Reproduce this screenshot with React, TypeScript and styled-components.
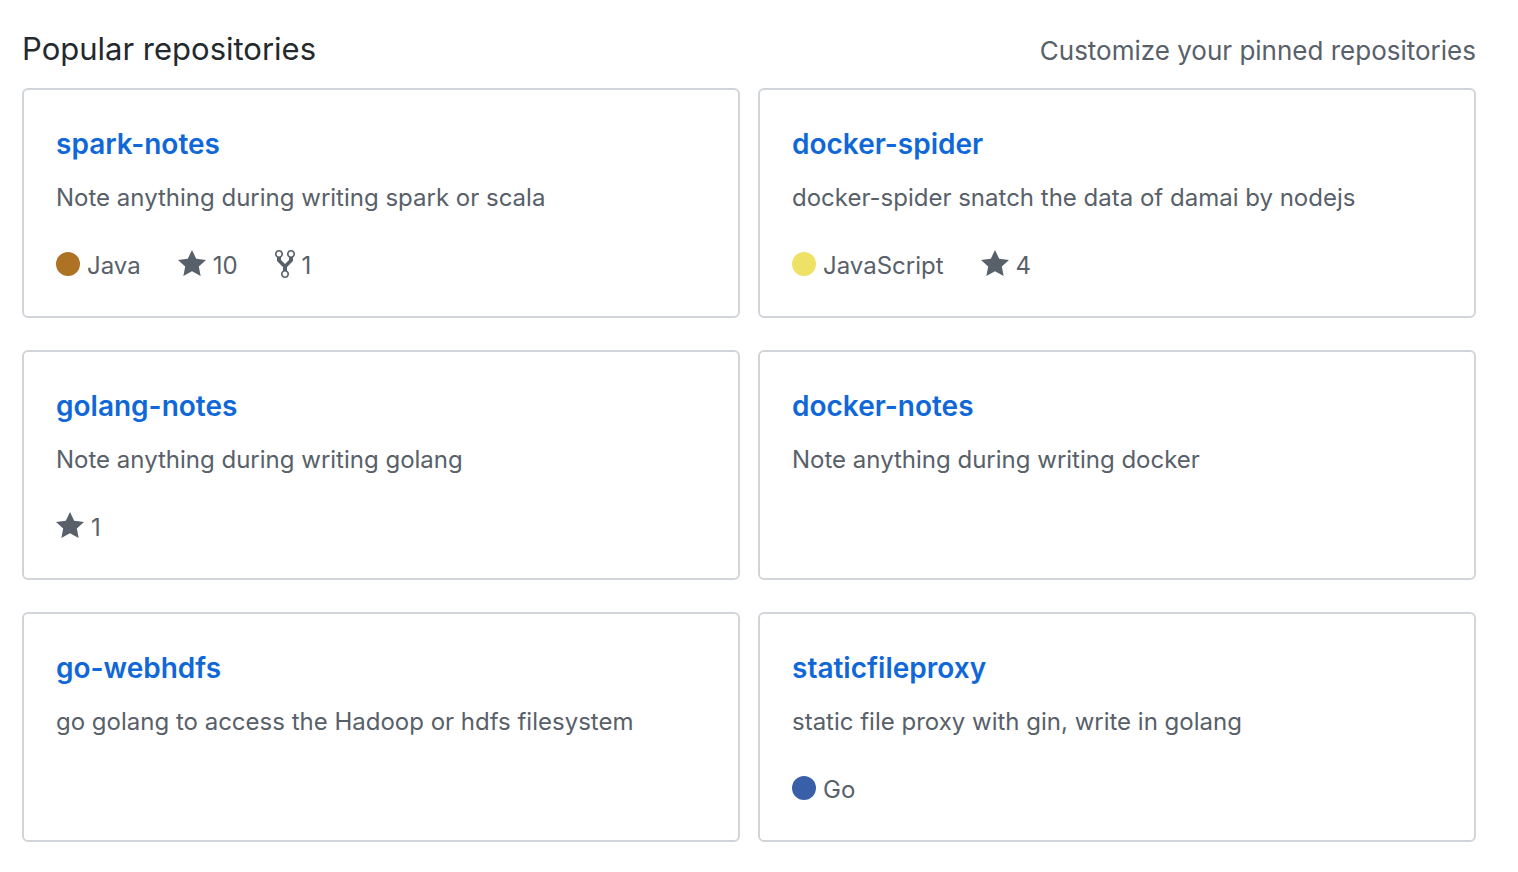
import React from "react";
import styled, { createGlobalStyle } from "styled-components";

const GlobalStyle = createGlobalStyle`
  * { box-sizing: border-box; }
  body {
    margin: 0;
    background: #fff;
    color: #24292e;
    font-family: Inter, "Liberation Sans", sans-serif;
    font-size: 24px;
    line-height: 36px;
  }
`;

const Page = styled.main`
  padding: 24px 42px 30px 22px;
`;

const Header = styled.header`
  display: flex;
  align-items: baseline;
  justify-content: space-between;
  margin-bottom: 14px;
`;

const Heading = styled.h2`
  margin: 0;
  font-size: 31px;
  font-weight: 400;
  line-height: 50px;
`;

const CustomizeLink = styled.a`
  color: #586069;
  font-size: 26px;
  text-decoration: none;
`;

const RepoGrid = styled.ol`
  display: grid;
  grid-template-columns: repeat(2, minmax(0, 1fr));
  gap: 32px 18px;
  margin: 0;
  padding: 0;
  list-style: none;
`;

const RepoCard = styled.li`
  display: flex;
  flex-direction: column;
  min-height: 230px;
  padding: 32px;
  border: 2px solid #d1d5da;
  border-radius: 6px;
`;

const RepoName = styled.a`
  align-self: flex-start;
  color: #1068d8;
  font-size: 28px;
  font-weight: 600;
  line-height: 44px;
  text-decoration: none;
`;

const Description = styled.p`
  margin: 14px 0 32px;
  color: #586069;
`;

const Meta = styled.div`
  display: flex;
  gap: 37px;
  color: #586069;
`;

const MetaItem = styled.span`
  display: flex;
  align-items: center;
  gap: 7px;
`;

const MetaLink = styled(MetaItem).attrs({ as: "a" })<{ href: string }>`
  color: inherit;
  text-decoration: none;
`;

const LanguageDot = styled.span<{ $color: string }>`
  width: 24px;
  height: 24px;
  margin-bottom: 4px;
  border-radius: 50%;
  background: ${(p) => p.$color};
`;

const Icon = styled.svg`
  height: 32px;
  margin-bottom: 4px;
  fill: currentColor;
`;

const StarIcon = () => (
  <Icon width="28" viewBox="0 0 14 16" aria-hidden="true">
    <path d="M14 6l-4.9-.64L7 1 4.9 5.36 0 6l3.6 3.26L2.67 14 7 11.67 11.33 14l-.93-4.74z" />
  </Icon>
);

const ForkIcon = () => (
  <Icon width="20" viewBox="0 0 10 16" aria-hidden="true">
    <path
      fillRule="evenodd"
      d="M8 1a1.993 1.993 0 0 0-1 3.72V6L5 8 3 6V4.72A1.993 1.993 0 0 0 2 1a1.993 1.993 0 0 0-1 3.72V6.5l3 3v1.78A1.993 1.993 0 0 0 5 15a1.993 1.993 0 0 0 1-3.72V9.5l3-3V4.72A1.993 1.993 0 0 0 8 1zM2 4.2C1.34 4.2.8 3.65.8 3c0-.65.55-1.2 1.2-1.2.65 0 1.2.55 1.2 1.2 0 .65-.55 1.2-1.2 1.2zm3 10c-.66 0-1.2-.55-1.2-1.2 0-.65.55-1.2 1.2-1.2.65 0 1.2.55 1.2 1.2 0 .65-.55 1.2-1.2 1.2zm3-10c-.66 0-1.2-.55-1.2-1.2 0-.65.55-1.2 1.2-1.2.65 0 1.2.55 1.2 1.2 0 .65-.55 1.2-1.2 1.2z"
    />
  </Icon>
);

interface Repo {
  name: string;
  description: string;
  language?: { name: string; color: string };
  stars?: number;
  forks?: number;
}

const repos: Repo[] = [
  {
    name: "spark-notes",
    description: "Note anything during writing spark or scala",
    language: { name: "Java", color: "#ae7225" },
    stars: 10,
    forks: 1,
  },
  {
    name: "docker-spider",
    description: "docker-spider snatch the data of damai by nodejs",
    language: { name: "JavaScript", color: "#efe066" },
    stars: 4,
  },
  { name: "golang-notes", description: "Note anything during writing golang", stars: 1 },
  { name: "docker-notes", description: "Note anything during writing docker" },
  { name: "go-webhdfs", description: "go golang to access the Hadoop or hdfs filesystem" },
  {
    name: "staticfileproxy",
    description: "static file proxy with gin, write in golang",
    language: { name: "Go", color: "#3a5fa9" },
  },
];

export default function App() {
  return (
    <>
      <GlobalStyle />
      <Page>
        <Header>
          <Heading>Popular repositories</Heading>
          <CustomizeLink href="#customize">Customize your pinned repositories</CustomizeLink>
        </Header>
        <RepoGrid>
          {repos.map((repo) => (
            <RepoCard key={repo.name}>
              <RepoName href={`#${repo.name}`}>{repo.name}</RepoName>
              <Description>{repo.description}</Description>
              <Meta>
                {repo.language && (
                  <MetaItem>
                    <LanguageDot $color={repo.language.color} />
                    {repo.language.name}
                  </MetaItem>
                )}
                {repo.stars && (
                  <MetaLink href={`#${repo.name}/stargazers`}>
                    <StarIcon />
                    {repo.stars}
                  </MetaLink>
                )}
                {repo.forks && (
                  <MetaLink href={`#${repo.name}/network`}>
                    <ForkIcon />
                    {repo.forks}
                  </MetaLink>
                )}
              </Meta>
            </RepoCard>
          ))}
        </RepoGrid>
      </Page>
    </>
  );
}
